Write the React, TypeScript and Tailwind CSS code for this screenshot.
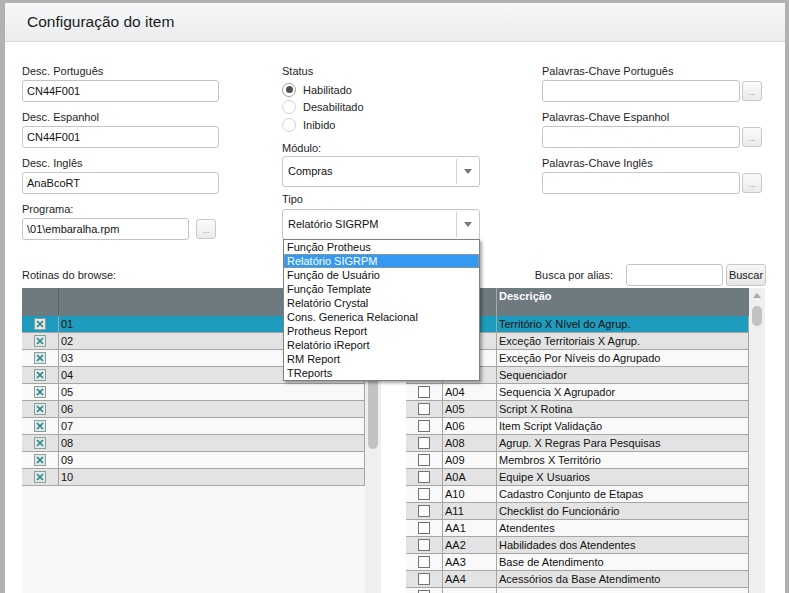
import type { ReactNode } from 'react';

const TIPOS = [
  'Função Protheus',
  'Relatório SIGRPM',
  'Função de Usuário',
  'Função Template',
  'Relatório Crystal',
  'Cons. Generica Relacional',
  'Protheus Report',
  'Relatório iReport',
  'RM Report',
  'TReports',
];

const ROTINAS = ['01', '02', '03', '04', '05', '06', '07', '08', '09', '10'];

const ALIASES: [string, string][] = [
  ['A00', 'Território X Nível do Agrup.'],
  ['A01', 'Exceção Territoriais X Agrup.'],
  ['A02', 'Exceção Por Níveis do Agrupado'],
  ['A03', 'Sequenciador'],
  ['A04', 'Sequencia X Agrupador'],
  ['A05', 'Script X Rotina'],
  ['A06', 'Item Script Validação'],
  ['A08', 'Agrup. X Regras Para Pesquisas'],
  ['A09', 'Membros X Território'],
  ['A0A', 'Equipe X Usuarios'],
  ['A10', 'Cadastro Conjunto de Etapas'],
  ['A11', 'Checklist do Funcionário'],
  ['AA1', 'Atendentes'],
  ['AA2', 'Habilidades dos Atendentes'],
  ['AA3', 'Base de Atendimento'],
  ['AA4', 'Acessórios da Base Atendimento'],
  ['', ''],
];

function Label({ children, className = '' }: { children: ReactNode; className?: string }) {
  return <div className={`h-[14px] leading-[14px] text-[11px] text-[#1e1e1e] ${className}`}>{children}</div>;
}

function TextInput({ value = '', className = '' }: { value?: string; className?: string }) {
  return (
    <div
      className={`h-[22px] rounded-[3px] border border-[#c4c4c4] bg-white px-[4px] text-[11px] leading-[20px] text-[#111] ${className}`}
    >
      {value}
    </div>
  );
}

function DotsButton({ className = '' }: { className?: string }) {
  return (
    <div
      className={`w-[20px] h-[20px] rounded-[3px] border border-[#c8c8c8] bg-gradient-to-b from-[#fbfbfb] to-[#ebebeb] flex items-end justify-center pb-[3px] text-[8px] leading-[8px] text-[#777] ${className}`}
    >
      ...
    </div>
  );
}

function Radio({ label, checked = false }: { label: string; checked?: boolean }) {
  return (
    <div className="h-[17.5px] flex items-center">
      <span
        className={`w-[14px] h-[14px] rounded-full border bg-white flex items-center justify-center ${
          checked ? 'border-[#9c9c9c]' : 'border-[#d2d2d2]'
        }`}
      >
        {checked && <span className="w-[7px] h-[7px] rounded-full bg-[#4f4f4f]" />}
      </span>
      <span className="ml-[7px] text-[11px] text-[#1e1e1e]">{label}</span>
    </div>
  );
}

function Select({ value, children }: { value: string; children?: ReactNode }) {
  return (
    <div className="relative h-[31px] rounded-[3px] border border-[#c6c6c6] bg-white flex items-center">
      <span className="flex-1 pl-[5px] text-[11px] text-[#111]">{value}</span>
      <span className="w-px h-[25px] bg-[#d2d2d2]" />
      <span className="w-[22px] flex justify-center">
        <svg width="8" height="5" viewBox="0 0 8 5">
          <path d="M0 0H8L4 5Z" fill="#787878" />
        </svg>
      </span>
      {children}
    </div>
  );
}

function CheckedBox() {
  return (
    <svg width="12" height="12" viewBox="0 0 12 12">
      <rect x="0.5" y="0.5" width="11" height="11" fill="#e2eaea" stroke="#8a9e9e" />
      <path d="M3 3L9 9M9 3L3 9" stroke="#2e8485" strokeWidth="1.7" />
    </svg>
  );
}

function EmptyBox() {
  return (
    <svg width="12" height="12" viewBox="0 0 12 12">
      <rect x="0.5" y="0.5" width="11" height="11" fill="#fdfdfd" stroke="#737373" />
    </svg>
  );
}

function rowBg(i: number) {
  if (i === 0) return 'bg-[#1f9cbd]';
  return i % 2 === 1 ? 'bg-[#e3e3e3]' : 'bg-[#f9f9f9]';
}

function Scrollbar({ thumb }: { thumb: string }) {
  return (
    <div className="w-[16px] bg-[#efefef] flex flex-col items-center pt-[5px]">
      <svg width="8" height="5" viewBox="0 0 8 5">
        <path d="M0 5H8L4 0Z" fill="#a9a9a9" />
      </svg>
      <div className={`mt-[8px] w-[10px] rounded-full bg-[#c2c2c2] ${thumb}`} />
    </div>
  );
}

export default function App() {
  return (
    <div className="w-[789px] h-[593px] overflow-hidden bg-[#b1b1b1] pl-[5px] pt-[3px] pr-[4px] font-['Liberation_Sans',Arial,sans-serif] text-[11px] text-[#1e1e1e]">
      <div className="h-full bg-white flex flex-col">
        <div className="h-[39px] shrink-0 border-b border-[#d5d7d9] bg-gradient-to-b from-[#f6f7f8] to-[#eaecee] flex items-center pl-[22px] text-[15.5px] text-[#1c1c1c]">
          Configuração do item
        </div>

        <div className="flex-1 min-h-0 flex flex-col pl-[17px] pt-[22px]">
          {/* formulário */}
          <div className="flex h-[176px] shrink-0">
            <div className="w-[197px]">
              <Label>Desc. Português</Label>
              <TextInput value="CN44F001" className="mt-[2px]" />
              <Label className="mt-[8px]">Desc. Espanhol</Label>
              <TextInput value="CN44F001" className="mt-[2px]" />
              <Label className="mt-[8px]">Desc. Inglês</Label>
              <TextInput value="AnaBcoRT" className="mt-[2px]" />
              <Label className="mt-[8px]">Programa:</Label>
              <div className="mt-[2px] flex">
                <TextInput value="\01\embaralha.rpm" className="w-[167px]" />
                <DotsButton className="ml-[7px] mt-[1px]" />
              </div>
            </div>

            <div className="w-[198px] ml-[63px]">
              <Label>Status</Label>
              <div className="mt-[3px]">
                <Radio label="Habilitado" checked />
                <Radio label="Desabilitado" />
                <Radio label="Inibido" />
              </div>
              <Label className="mt-[7.5px]">Módulo:</Label>
              <div className="mt-[1px]">
                <Select value="Compras" />
              </div>
              <Label className="mt-[5px]">Tipo</Label>
              <div className="mt-[3px]">
                <Select value="Relatório SIGRPM">
                  <div className="absolute left-0 top-[29px] z-10 w-[197px] border border-[#808080] bg-white shadow-[2px_2px_3px_rgba(0,0,0,0.35)]">
                    {TIPOS.map((t) => (
                      <div
                        key={t}
                        className={`h-[14px] leading-[14px] pl-[3px] text-[11px] ${
                          t === 'Relatório SIGRPM'
                            ? 'bg-[#3399f3] text-white outline-1 outline-dotted outline-offset-[-1px] outline-[#c9935a]'
                            : 'text-[#111]'
                        }`}
                      >
                        {t}
                      </div>
                    ))}
                  </div>
                </Select>
              </div>
            </div>

            <div className="w-[221px] ml-[62px]">
              <Label>Palavras-Chave Português</Label>
              <div className="mt-[2px] flex">
                <TextInput className="w-[198px]" />
                <DotsButton className="ml-[2px] mt-[1px]" />
              </div>
              <Label className="mt-[8px]">Palavras-Chave Espanhol</Label>
              <div className="mt-[2px] flex">
                <TextInput className="w-[198px]" />
                <DotsButton className="ml-[2px] mt-[1px]" />
              </div>
              <Label className="mt-[8px]">Palavras-Chave Inglês</Label>
              <div className="mt-[2px] flex">
                <TextInput className="w-[198px]" />
                <DotsButton className="ml-[2px] mt-[1px]" />
              </div>
            </div>
          </div>

          {/* rótulos das listas */}
          <div className="mt-[24px] h-[22px] w-[744px] shrink-0 flex items-center justify-between">
            <span>Rotinas do browse:</span>
            <div className="flex items-center">
              <span>Busca por alias:</span>
              <TextInput className="ml-[13px] w-[97px]" />
              <div className="ml-[3px] w-[40px] h-[22px] rounded-[3px] border border-[#c8c8c8] bg-gradient-to-b from-[#f7f7f7] to-[#e6e6e6] flex items-center justify-center text-[11px] text-[#222]">
                Buscar
              </div>
            </div>
          </div>

          {/* listas */}
          <div className="mt-[2px] flex-1 min-h-0 flex overflow-hidden">
            <div className="w-[359px] flex">
              <div className="w-[343px] bg-[#f8f8f8] flex flex-col">
                <div className="h-[28px] bg-[#6d7a7f] flex shrink-0">
                  <div className="w-[36px]" />
                  <div className="flex-1 border-l border-[#56636a]" />
                </div>
                {ROTINAS.map((r, i) => (
                  <div key={r} className={`h-[17px] shrink-0 flex border-b border-r border-[#a6a6a6] ${rowBg(i)}`}>
                    <div className="w-[36px] flex items-center justify-center">
                      <CheckedBox />
                    </div>
                    <div className="flex-1 border-l border-[#a6a6a6] pl-[2px] leading-[16px] text-[#111]">{r}</div>
                  </div>
                ))}
              </div>
              <Scrollbar thumb="h-[143px]" />
            </div>

            <div className="w-[359px] ml-[25px] flex">
              <div className="w-[343px] flex flex-col">
                <div className="h-[28px] bg-[#6d7a7f] flex shrink-0">
                  <div className="w-[36px]" />
                  <div className="w-[54px] border-l border-[#56636a]" />
                  <div className="flex-1 border-l border-[#a2acaf] pl-[2px] pt-[1px] leading-[14px] font-bold text-white">
                    Descrição
                  </div>
                </div>
                {ALIASES.map(([code, desc], i) => (
                  <div key={i} className={`h-[17px] shrink-0 flex border-b border-r border-[#a6a6a6] ${rowBg(i)}`}>
                    <div className="w-[36px] flex items-center justify-center">
                      <EmptyBox />
                    </div>
                    <div className="w-[54px] border-l border-[#a6a6a6] pl-[2px] leading-[16px] text-[#111]">{code}</div>
                    <div className="flex-1 border-l border-[#a6a6a6] pl-[2px] leading-[16px] text-[#111]">{desc}</div>
                  </div>
                ))}
              </div>
              <Scrollbar thumb="h-[20px]" />
            </div>
          </div>
        </div>
      </div>
    </div>
  );
}
